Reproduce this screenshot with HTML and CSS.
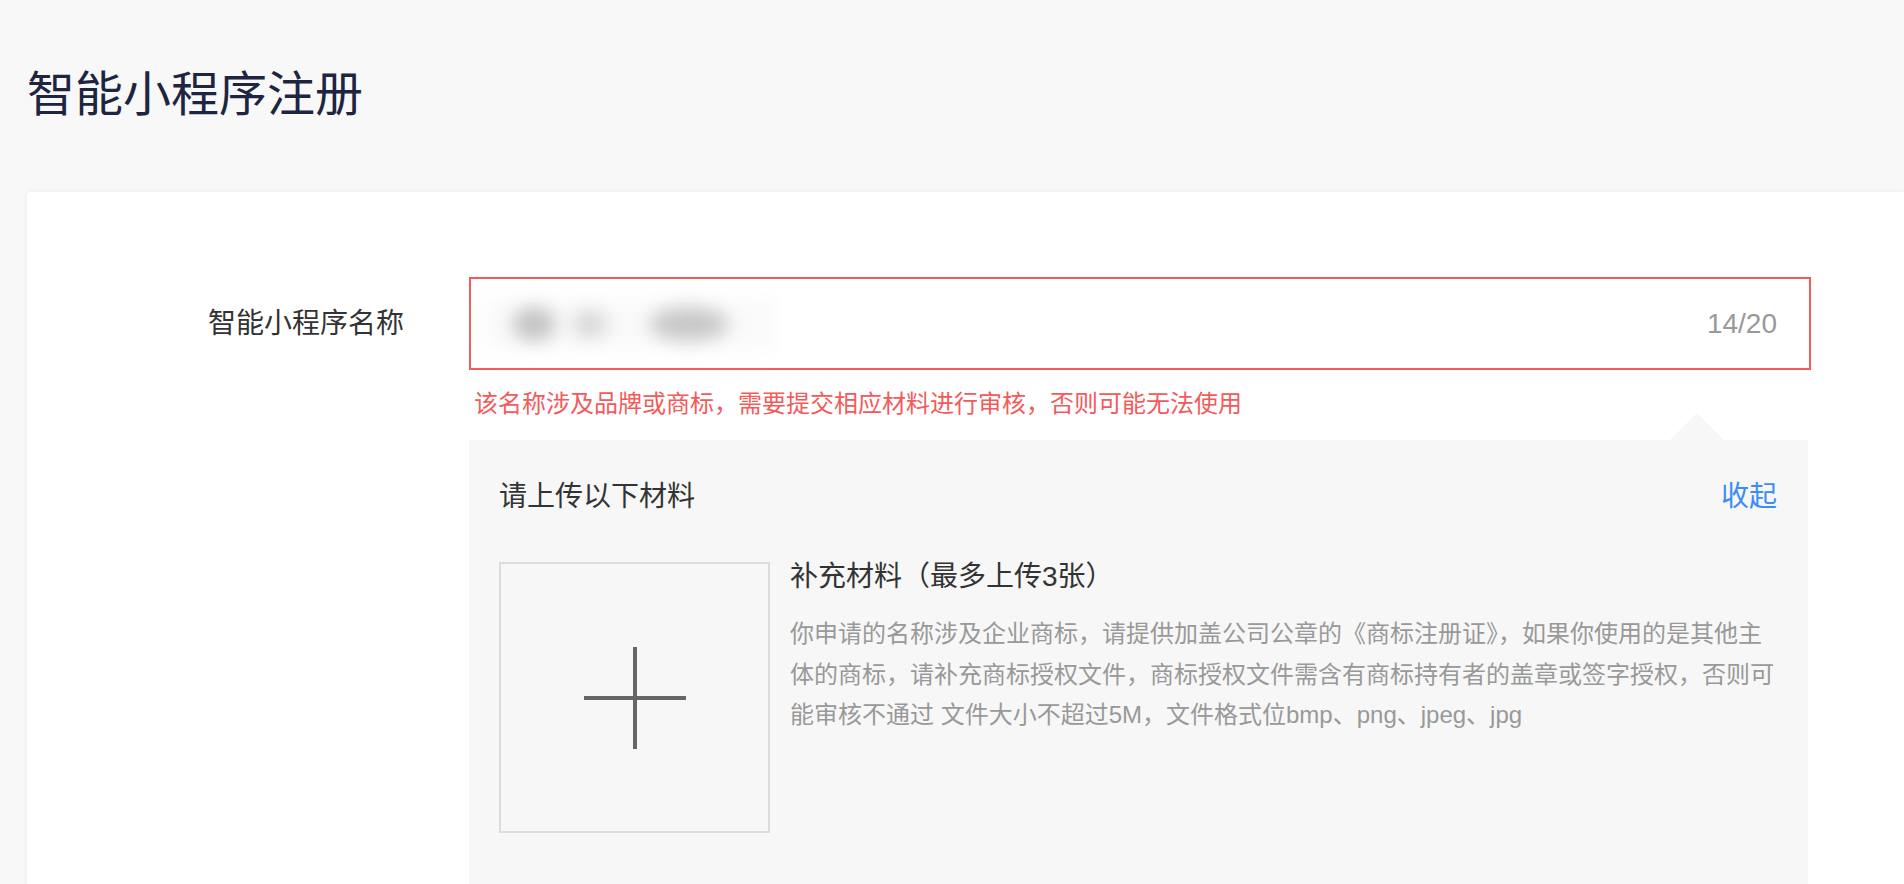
FILE: index.html
```html
<!DOCTYPE html>
<html lang="zh-CN">
<head>
<meta charset="utf-8">
<title>智能小程序注册</title>
<link rel="stylesheet" href="styles.css">
</head>
<body>
<div class="page">
  <h1 class="title">智能小程序注册</h1>
  <div class="card">
    <div class="form-row">
      <div class="label">智能小程序名称</div>
      <div class="field">
        <div class="input">
          <span class="value" aria-label="已隐藏的名称">
            <i class="blob b1"></i><i class="blob b2"></i><i class="blob b3"></i>
          </span>
          <span class="counter">14/20</span>
        </div>
        <div class="error">该名称涉及品牌或商标，需要提交相应材料进行审核，否则可能无法使用</div>
        <div class="panel">
          <div class="arrow"></div>
          <div class="panel-head">
            <span class="panel-title">请上传以下材料</span>
            <a class="collapse">收起</a>
          </div>
          <div class="upload-row">
            <div class="upload-box">
              <svg width="102" height="102" viewBox="0 0 102 102" aria-hidden="true">
                <rect x="0" y="49" width="102" height="4" fill="#666"/>
                <rect x="49" y="0" width="4" height="102" fill="#666"/>
              </svg>
            </div>
            <div class="upload-info">
              <div class="upload-title">补充材料（最多上传3张）</div>
              <div class="upload-desc">你申请的名称涉及企业商标，请提供加盖公司公章的《商标注册证》，如果你使用的是其他主体的商标，请补充商标授权文件，商标授权文件需含有商标持有者的盖章或签字授权，否则可能审核不通过 文件大小不超过5M，文件格式位bmp、png、jpeg、jpg</div>
            </div>
          </div>
        </div>
      </div>
    </div>
  </div>
</div>
</body>
</html>
```

FILE: styles.css
```css
* { box-sizing: border-box; }
html, body { margin: 0; padding: 0; }
body {
  background: #f8f8f8;
  font-family: "Liberation Sans", "Noto Sans CJK SC", sans-serif;
  color: #333;
  overflow: hidden;
}
.page {
  padding: 66px 0 0 27px;
}
.title {
  margin: 0 0 68px 0;
  font-size: 48px;
  line-height: 58px;
  font-weight: 400;
  color: #1d2540;
}
.card {
  background: #fff;
  border-radius: 4px 0 0 0;
  box-shadow: 0 0 5px rgba(0, 0, 0, 0.05);
  min-height: 700px;
  padding-top: 85px;
}
.form-row {
  display: grid;
  grid-template-columns: 377px 1342px;
  column-gap: 65px;
  align-items: start;
}
.label {
  text-align: right;
  font-size: 28px;
  line-height: 93px;
  color: #333;
}
.input {
  height: 93px;
  border: 2px solid #f45a5a;
  background: #fff;
  display: flex;
  align-items: center;
  justify-content: space-between;
  padding: 0 32px 0 14px;
}
.value {
  display: flex;
  align-items: center;
  width: 290px;
  height: 50px;
  background: #fafafa;
  filter: blur(9px);
}
.blob {
  display: block;
  border-radius: 50%;
  background: #c4c4c4;
}
.b1 { width: 44px; height: 34px; margin-left: 27px; }
.b2 { width: 36px; height: 28px; margin-left: 16px; background: #d8d8d8; }
.b3 { width: 80px; height: 34px; margin-left: 41px; background: #c8c8c8; }
.counter {
  font-size: 28px;
  color: #999;
}
.error {
  margin-top: 17px;
  font-size: 24px;
  line-height: 34px;
  color: #f45a5a;
  padding-left: 5px;
}
.panel {
  position: relative;
  margin-top: 19px;
  width: 1339px;
  background: #f7f7f7;
  padding: 37px 31px 60px 30px;
}
.arrow {
  position: absolute;
  top: -27px;
  right: 84px;
  width: 0;
  height: 0;
  border-left: 27px solid transparent;
  border-right: 27px solid transparent;
  border-bottom: 27px solid #f7f7f7;
}
.panel-head {
  display: flex;
  justify-content: space-between;
  align-items: center;
  font-size: 28px;
  line-height: 40px;
}
.panel-title { color: #333; }
.collapse {
  color: #3a8cf6;
  cursor: pointer;
}
.upload-row {
  margin-top: 45px;
  display: flex;
  gap: 20px;
}
.upload-box {
  flex: 0 0 271px;
  width: 271px;
  height: 271px;
  border: 2px solid #dcdcdc;
  display: flex;
  align-items: center;
  justify-content: center;
}
.upload-info {
  width: 990px;
}
.upload-title {
  font-size: 28px;
  line-height: 30px;
  color: #333;
}
.upload-desc {
  margin-top: 22px;
  font-size: 24px;
  line-height: 40.5px;
  color: #999;
}
```
